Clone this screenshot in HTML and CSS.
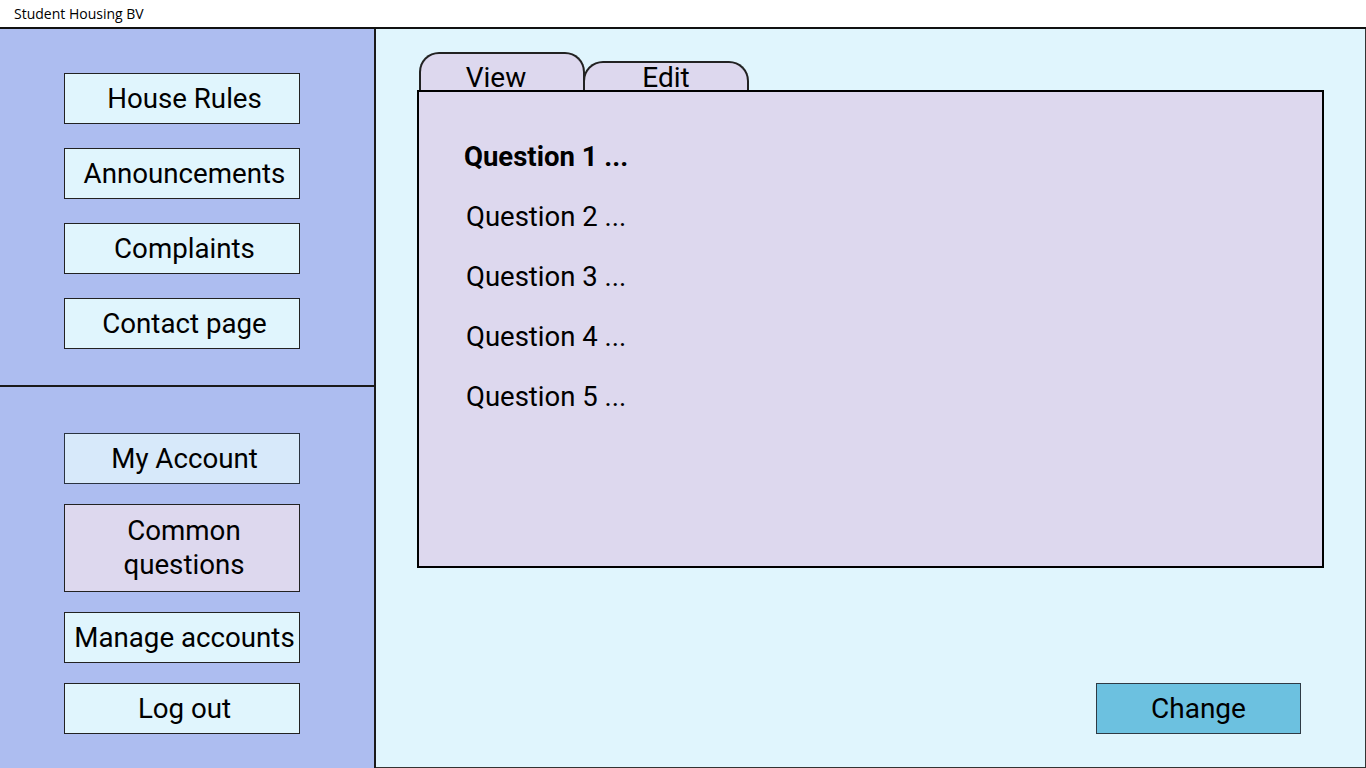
FILE: index.html
```html
<!DOCTYPE html>
<html lang="en">
<head>
<meta charset="utf-8">
<title>Student Housing BV</title>
<link rel="stylesheet" href="styles.css">
</head>
<body>
<div class="titlebar">Student Housing BV</div>
<div class="app">
  <aside class="sidebar">
    <div class="side-top">
      <div class="navbtn">House Rules</div>
      <div class="navbtn">Announcements</div>
      <div class="navbtn">Complaints</div>
      <div class="navbtn">Contact page</div>
    </div>
    <div class="divider"></div>
    <div class="side-bottom">
      <div class="navbtn account">My Account</div>
      <div class="navbtn common">Common<br>questions</div>
      <div class="navbtn">Manage accounts</div>
      <div class="navbtn">Log out</div>
    </div>
  </aside>
  <main class="main">
    <div class="tabs">
      <div class="tab tab-view"><span>View</span></div>
      <div class="tab tab-edit"><span>Edit</span></div>
    </div>
    <div class="panel">
      <div class="question bold">Question 1 ...</div>
      <div class="question">Question 2 ...</div>
      <div class="question">Question 3 ...</div>
      <div class="question">Question 4 ...</div>
      <div class="question">Question 5 ...</div>
    </div>
    <div class="actions">
      <div class="changebtn">Change</div>
    </div>
  </main>
</div>
</body>
</html>
```

FILE: styles.css
```css
* { box-sizing: border-box; }
html, body { margin: 0; padding: 0; }
body {
  width: 1366px;
  height: 768px;
  overflow: hidden;
  font-family: Roboto, "Liberation Sans", sans-serif;
  color: #000;
  background: #fff;
}
.titlebar {
  height: 29px;
  border-bottom: 2px solid #111;
  padding-left: 14px;
  font-family: "Open Sans", "Noto Sans", sans-serif;
  font-size: 14px;
  line-height: 27px;
  background: #fff;
}
.app {
  display: flex;
  height: 739px;
}
.sidebar {
  width: 376px;
  flex: none;
  background: #adbdf0;
  border-right: 2px solid #1a1a1a;
  display: flex;
  flex-direction: column;
}
.side-top {
  height: 356px;
  padding: 44px 0 0 64px;
  display: flex;
  flex-direction: column;
  gap: 24px;
}
.divider {
  height: 2px;
  background: #1a1a1a;
}
.side-bottom {
  padding: 46px 0 0 64px;
  display: flex;
  flex-direction: column;
  gap: 20px;
}
.navbtn {
  width: 236px;
  height: 51px;
  border: 1px solid #222;
  background: #e0f5fd;
  display: flex;
  align-items: center;
  justify-content: center;
  text-align: center;
  padding-left: 5px;
  font-size: 27.7px;
  line-height: 34px;
}
.navbtn.account { background: #d7e9fa; border-color: #2a3340; }
.navbtn.common { background: #ddd8ee; height: 88px; padding-left: 4px; }
.main {
  flex: 1;
  background: #e0f5fd;
  border-right: 1px solid #333;
  border-bottom: 1px solid #333;
  padding: 23px 0 0 41px;
  display: flex;
  flex-direction: column;
}
.tabs {
  display: flex;
  align-items: flex-end;
  padding-left: 2px;
}
.tab {
  background: #ddd8ee;
  border: 2px solid #222;
  border-bottom: none;
  border-radius: 20px 20px 0 0;
  display: flex;
  justify-content: center;
  align-items: flex-end;
  font-size: 28px;
  line-height: 1;
}
.tab-view { width: 166px; height: 38px; position: relative; z-index: 1; }
.tab-view span { margin-right: 12px; margin-bottom: -2px; }
.tab-edit { width: 166px; height: 29px; margin-left: -2px; }
.tab-edit span { margin-bottom: -2px; }
.panel {
  width: 907px;
  height: 478px;
  border: 2px solid #000;
  background: #ddd8ee;
  padding: 35px 0 0 47px;
  display: flex;
  flex-direction: column;
}
.question {
  font-size: 27.5px;
  line-height: 60px;
  height: 60px;
}
.question.bold { font-weight: 700; margin-left: -2px; }
.actions {
  margin-top: auto;
  display: flex;
  justify-content: flex-end;
  padding: 0 64px 33px 0;
}
.changebtn {
  width: 205px;
  height: 51px;
  background: #6cc1e0;
  border: 1px solid #2e3a44;
  display: flex;
  align-items: center;
  justify-content: center;
  font-size: 28px;
}
```
